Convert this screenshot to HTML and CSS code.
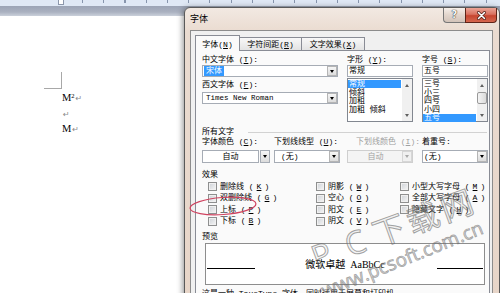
FILE: index.html
```html
<!DOCTYPE html>
<html lang="zh-CN">
<head>
<meta charset="utf-8">
<title>字体</title>
<link rel="stylesheet" href="styles.css">
</head>
<body>
<div class="screen">
  <div class="ruler"><span class="ruler-marker"></span><span class="ticks"></span></div>
  <div class="band"></div>
  <main class="doc">
    <div class="corner"></div>
    <p class="para first">M<span class="sup">2</span><span class="pm">↵</span></p>
    <p class="para"><span class="pm">↵</span></p>
    <p class="para">M<span class="pm">↵</span></p>
  </main>

  <section class="dialog">
    <header class="titlebar">
      <span class="title">字体</span>
      <div class="caption-btns">
        <span class="cbtn help">?</span>
        <span class="cbtn close"><svg width="11" height="9" viewBox="0 0 11 9"><path d="M2.5 1.5 L8.5 7.5 M8.5 1.5 L2.5 7.5" stroke="#4a1a12" stroke-width="3" stroke-linecap="round"/><path d="M2.5 1.5 L8.5 7.5 M8.5 1.5 L2.5 7.5" stroke="#ffffff" stroke-width="1.6" stroke-linecap="round"/></svg></span>
      </div>
    </header>
    <div class="client">
      <div class="tabs">
        <span class="tab sel">字体(<u>N</u>)</span>
        <span class="tab">字符间距(<u>R</u>)</span>
        <span class="tab">文字效果(<u>X</u>)</span>
      </div>
      <div class="panel">
        <div class="top-row">
          <div class="col">
            <div class="lbl">中文字体 (<u>T</u>):</div>
            <div class="combo"><span class="val"><span class="hl">宋体</span></span><span class="dd"></span></div>
            <div class="lbl l2">西文字体 (<u>F</u>):</div>
            <div class="combo c2"><span class="val mono">Times New Roman</span><span class="dd"></span></div>
          </div>
          <div class="col">
            <div class="lbl">字形 (<u>Y</u>):</div>
            <div class="input">常规</div>
            <div class="list">
              <div class="items">
                <div class="item sel">常规</div>
                <div class="item">倾斜</div>
                <div class="item">加粗</div>
                <div class="item">加粗 倾斜</div>
              </div>
              <div class="sb"><span class="sb-btn up"></span><span class="sb-track"></span><span class="sb-btn down"></span></div>
            </div>
          </div>
          <div class="col">
            <div class="lbl">字号 (<u>S</u>):</div>
            <div class="input">五号</div>
            <div class="list">
              <div class="items">
                <div class="item">三号</div>
                <div class="item">小三</div>
                <div class="item">四号</div>
                <div class="item">小四</div>
                <div class="item sel">五号</div>
              </div>
              <div class="sb"><span class="sb-btn up"></span><span class="sb-track"><span class="thumb"></span></span><span class="sb-btn down"></span></div>
            </div>
          </div>
        </div>

        <div class="group-head"><span>所有文字</span><span class="rule"></span></div>
        <div class="row2">
          <span class="lbl">字体颜色 (<u>C</u>):</span>
          <span class="lbl">下划线线型 (<u>U</u>):</span>
          <span class="lbl dis">下划线颜色 (<u>I</u>):</span>
          <span class="lbl">着重号:</span>
        </div>
        <div class="row2 combos">
          <div class="color-combo"><span class="cbox">自动</span><span class="dd tall"></span></div>
          <div class="combo c13 pad6"><span class="val">(无)</span><span class="dd"></span></div>
          <div class="combo c13 disabled"><span class="val">自动</span><span class="dd"></span></div>
          <div class="combo c13"><span class="val">(无)</span><span class="dd"></span></div>
        </div>

        <div class="group-head fx"><span>效果</span></div>
        <div class="effects">
          <label class="chk"><span class="box"></span>删除线 (<u>K</u>)</label>
          <label class="chk"><span class="box"></span>双删除线 (<u>G</u>)</label>
          <label class="chk"><span class="box"></span>上标 (<u>P</u>)</label>
          <label class="chk"><span class="box"></span>下标 (<u>B</u>)</label>
          <label class="chk"><span class="box"></span>阴影 (<u>W</u>)</label>
          <label class="chk"><span class="box"></span>空心 (<u>O</u>)</label>
          <label class="chk"><span class="box"></span>阳文 (<u>E</u>)</label>
          <label class="chk"><span class="box"></span>阴文 (<u>V</u>)</label>
          <label class="chk"><span class="box"></span>小型大写字母 (<u>M</u>)</label>
          <label class="chk"><span class="box"></span>全部大写字母 (<u>A</u>)</label>
          <label class="chk"><span class="box"></span>隐藏文字 (<u>H</u>)</label>
        </div>

        <div class="lbl pv-lbl">预览</div>
        <div class="preview">
          <span class="pv-line l"></span>
          <span class="pv-text">微软卓越&nbsp; AaBbCc</span>
          <span class="pv-line r"></span>
        </div>
        <p class="note">这是一种 TrueType 字体，同时适用于屏幕和打印机。</p>
      </div>
    </div>
  </section>

  <svg class="mark" width="70" height="22" viewBox="0 0 70 22"><ellipse cx="35" cy="11" rx="33" ry="8.5" transform="rotate(-4 35 11)" fill="none" stroke="#cf4460" stroke-width="1.2"/></svg>
  <div class="wm wm-big"><span>P</span><span>C</span><span>下</span><span>载</span><span>网</span></div>
  <div class="wm wm-url">www.pcsoft.com.cn</div>
</div>
</body>
</html>
```

FILE: styles.css
```css
* { box-sizing: border-box; margin: 0; padding: 0; }
html, body { width: 500px; height: 293px; overflow: hidden; background: #fff; }
body {
  font-family: "Liberation Mono", "Noto Sans CJK SC", monospace;
  font-size: 8px;
  line-height: 10px;
  color: #000;
}
u { text-decoration: underline; text-underline-offset: 1px; }

.screen {
  position: relative;
  width: 500px;
  height: 293px;
  overflow: hidden;
  display: flex;
  flex-direction: column;
}

/* Word ruler + band */
.ruler { flex: none; height: 6px; background: #dfe8f5; display: flex; align-items: flex-start; }
.ruler-marker { width: 6px; height: 5px; margin-left: 58px; background: #fff; border: 1px solid #8c97ab; border-top: 0; }
.ticks {
  flex: 1;
  height: 3px;
  margin-left: 18px;
  background: repeating-linear-gradient(90deg, #8795ad 0 1px, transparent 1px 21.25px);
}
.band { flex: none; height: 10px; background: linear-gradient(#9ba4b6, #aab1c0 60%, #cad0da); }

/* document */
.doc { flex: 1; background: #fff; padding-top: 56px; }
.corner { width: 18px; height: 17px; margin-left: 44px; border-right: 1px solid #a8a8a8; border-bottom: 1px solid #a8a8a8; }
.para {
  padding-left: 62px;
  font-family: "Liberation Serif", serif;
  font-size: 10.5px;
  line-height: 15.5px;
}
.para.first { margin-top: 1px; }
.sup { font-size: 6.5px; vertical-align: 3px; line-height: 0; }
.pm { font-family: "DejaVu Sans", sans-serif; font-size: 8px; color: #8a8a8a; line-height: 0; margin-left: 1px; }

/* dialog window */
.dialog {
  position: absolute;
  left: 184px;
  top: 7px;
  width: 316px;
  height: 300px;
  display: flex;
  flex-direction: column;
  border: 1px solid #595959;
  border-radius: 6px 6px 0 0;
  background: linear-gradient(#f2e9e2, #eadbd0 24px, #e7d5c8);
  box-shadow: -1px 1px 6px rgba(0, 0, 0, .45);
}
.titlebar { flex: none; height: 22px; display: flex; align-items: flex-start; }
.title { font-size: 9px; line-height: 10px; margin-top: 7px; padding-left: 5px; }
.caption-btns { margin-left: auto; margin-right: 2px; display: flex; }
.cbtn { height: 15px; display: flex; align-items: center; justify-content: center; }
.help {
  width: 22px;
  border: 1px solid #777;
  border-top: 0;
  border-right: 0;
  border-radius: 0 0 0 4px;
  background: linear-gradient(#f6efea, #e2d5cc 50%, #d3c4ba);
  font-family: "DejaVu Sans", sans-serif;
  font-weight: bold;
  font-size: 10px;
  color: #f8f8f8;
  text-shadow: 0 0 1px #222, 0 0 1px #222;
}
.close {
  width: 32px;
  border: 1px solid #5e2418;
  border-top: 0;
  border-radius: 0 0 4px 0;
  background: linear-gradient(#eba597, #d9715f 45%, #c6452f 55%, #d5674f);
}

.client {
  flex: 1;
  margin: 0 6px 0 5px;
  background: #f0f0f0;
  border: 1px solid #8c8c8c;
  border-bottom: 0;
  padding: 4px 2px 0 4px;
  display: flex;
  flex-direction: column;
}

.tabs { flex: none; height: 16px; margin-bottom: -1px; display: flex; align-items: flex-end; position: relative; z-index: 1; }
.tab {
  height: 13px;
  margin-bottom: 1px;
  margin-left: -1px;
  border: 1px solid #898c95;
  border-bottom: 0;
  background: linear-gradient(#f8f8f8, #e3e3e3);
  display: flex;
  align-items: flex-end;
  justify-content: center;
  padding-bottom: .4px;
  white-space: nowrap;
}
.tab.sel { width: 45px; height: 16px; margin: 0; background: #fafafa; padding-bottom: 1.4px; }
.tab:nth-child(2) { width: 63px; }
.tab:nth-child(3) { width: 64px; }

.panel { flex: 1; background: #fafafa; border: 1px solid #898c95; padding: 3.5px 0 0 6px; }

.top-row { display: grid; grid-template-columns: 136px 66px 66px; column-gap: 9px; }
.col { display: flex; flex-direction: column; }
.lbl { height: 10px; white-space: nowrap; }

.combo {
  height: 12px;
  margin-top: .5px;
  border: 1px solid #a6acb5;
  background: #fff;
  display: flex;
  align-items: center;
  padding-left: 1px;
}
.combo .val { flex: 1; white-space: nowrap; overflow: hidden; line-height: 10px; }
.hl { display: inline-block; background: #3399ff; color: #fff; padding: 0 2px; line-height: 10px; }
.mono { font-size: 7.5px; padding-left: 2px; }
.dd {
  flex: none;
  width: 10px;
  height: 10px;
  border: 1px solid #b5b5b5;
  background: linear-gradient(#f6f6f6, #dcdcdc);
  display: flex;
  align-items: center;
  justify-content: center;
}
.dd::after { content: ""; border-top: 3px solid #000; border-left: 2.5px solid transparent; border-right: 2.5px solid transparent; }
.l2 { margin-top: 3px; }
.c2 { margin-top: 2px; }

.input { height: 12px; margin-top: .5px; border: 1px solid #a6acb5; background: #fff; padding-left: 1px; line-height: 10px; }
.list { height: 44px; margin-top: 1px; border: 1px solid #828790; background: #fff; display: flex; }
.items { flex: 1; padding-top: .5px; }
.item { height: 8.5px; line-height: 8px; padding: .5px 0 0 1px; white-space: nowrap; }
.item.sel { background: #3399ff; color: #fff; }
.sb { flex: none; width: 10px; margin-left: 1px; background: #f0f0f0; display: flex; flex-direction: column; }
.sb-btn { flex: none; height: 12px; display: flex; align-items: center; justify-content: center; }
.sb-btn::after { content: ""; border-left: 2.5px solid transparent; border-right: 2.5px solid transparent; }
.up::after { border-bottom: 3px solid #606060; }
.down::after { border-top: 3px solid #606060; }
.sb-track { flex: 1; display: flex; flex-direction: column; }
.thumb { height: 12px; margin-top: 1px; border: 1px solid #999; border-radius: 2px; background: linear-gradient(90deg, #f4f4f4, #dadada); }

.group-head { height: 10px; display: flex; align-items: center; gap: 14px; margin-top: 5px; white-space: nowrap; }
.rule { flex: 1; height: 1px; background: #d2d2d2; margin-right: 2px; }
.fx { margin-top: 7px; }

.row2 { display: grid; grid-template-columns: 72px 73px 75px 66px; }
.row2 .dis { color: #a0a0a0; padding-left: 9px; }
.combos { margin-top: 3px; }
.color-combo { width: 68px; height: 13px; display: flex; gap: 1px; }
.cbox { flex: 1; border: 1px solid #a6acb5; background: #fff; text-align: center; line-height: 11px; }
.dd.tall { height: 13px; border-color: #a6acb5; }
.c13 { width: 66px; height: 13px; margin-top: 0; }
.c13 .dd { height: 11px; }
.pad6 { padding-left: 6px; }
.disabled { background: #f4f4f4; border-color: #cfcfcf; color: #a3a3a3; }
.disabled .val { text-align: center; }
.disabled .dd { border-color: #d6d6d6; background: #f0f0f0; }
.disabled .dd::after { border-top-color: #a8a8a8; }

.effects {
  display: grid;
  grid-template-columns: 108px 84px 1fr;
  grid-template-rows: repeat(4, 11.5px);
  grid-auto-flow: column;
  padding-left: 6px;
  margin-top: .75px;
}
.chk { display: flex; align-items: center; gap: 3px; white-space: nowrap; }
.box {
  flex: none;
  width: 9px;
  height: 9px;
  border: 1px solid #8e8f8f;
  background: linear-gradient(135deg, #cdd1d6, #f6f6f6);
  box-shadow: inset 0 0 0 1px #f0f0f0;
}

.pv-lbl { margin-top: 5.25px; }
.preview {
  width: 280px;
  height: 42px;
  margin: 1px 0 0 3px;
  border: 1px solid #8d8d8d;
  background: #fff;
  display: grid;
  grid-template-columns: 1fr auto 1fr;
  align-items: start;
  padding: 14.6px 1px 0;
}
.pv-line { height: 1px; background: #000; margin-top: 9.4px; }
.pv-line.l { width: 48px; justify-self: start; }
.pv-line.r { width: 46px; justify-self: end; }
.pv-text { font-family: "Liberation Serif", "Noto Sans CJK SC", serif; font-size: 10px; line-height: 12px; white-space: nowrap; padding: 0 2px; }
.note { margin-top: 4px; white-space: nowrap; }

/* overlays */
.mark { position: absolute; left: 188px; top: 195px; pointer-events: none; }
.wm { position: absolute; pointer-events: none; white-space: nowrap; }
.wm-big {
  left: 299px;
  top: 210px;
  width: 180px;
  height: 40px;
  display: flex;
  transform: rotate(-20deg);
  font-family: "Open Sans", "Noto Sans CJK SC", sans-serif;
  font-size: 32px;
  line-height: 40px;
  color: rgba(200, 200, 200, .2);
  -webkit-text-stroke: 1px rgba(105, 105, 105, .6);
}
.wm-big span { flex: 1; text-align: center; }
.wm-url {
  left: 311px;
  top: 247px;
  width: 182px;
  height: 24px;
  transform: rotate(-22deg);
  font-family: "Open Sans", sans-serif;
  font-size: 19px;
  line-height: 24px;
  text-align: center;
  color: rgba(140, 140, 140, .3);
  -webkit-text-stroke: .8px rgba(100, 100, 100, .55);
}
```
